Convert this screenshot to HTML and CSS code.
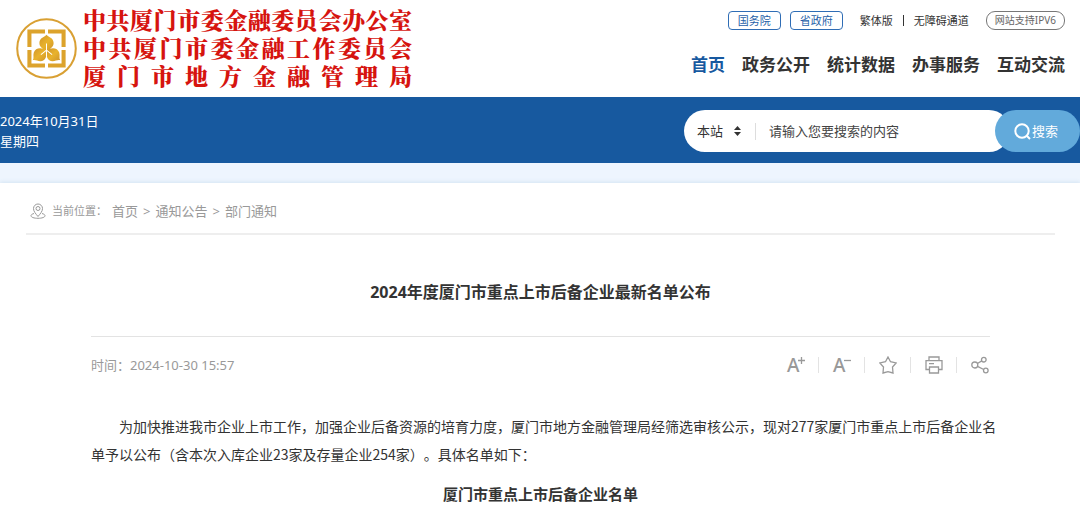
FILE: index.html
```
<!DOCTYPE html>
<html lang="zh-CN">
<head>
    <meta charset="UTF-8">
    <meta name="viewport" content="width=device-width, initial-scale=1.0">
    <title>2024年度厦门市重点上市后备企业最新名单公布</title>
    <link rel="stylesheet" href="styles.css">
</head>
<body>
    <header class="header">
        <a href="#" class="logo">
            <svg class="logo-mark" viewBox="0 0 60 60" aria-hidden="true">
                <defs>
                    <linearGradient id="gold" x1="0" y1="0" x2="1" y2="1">
                        <stop offset="0" stop-color="#cf942a"/>
                        <stop offset="0.5" stop-color="#e9b32c"/>
                        <stop offset="1" stop-color="#cf942a"/>
                    </linearGradient>
                </defs>
                <circle cx="30" cy="30" r="28.8" fill="none" stroke="#d9a033" stroke-width="2"/>
                <g fill="none" stroke="#dca32c" stroke-width="4">
                    <path d="M28.5 13.2H13.2V28.5M31.5 13.2H46.8V28.5M28.5 46.8H13.2V31.5M31.5 46.8H46.8V31.5"/>
                </g>
                <g fill="url(#gold)">
                    <path d="M30 16.5C31.500 18.500 37 19.500 37 24.500C37 28.500 33.500 30 30 33C26.500 30 23 28.500 23 24.500C23 19.500 28.500 18.500 30 16.5Z"/>
                    <path d="M29.700 32C31 37 29 42.500 24 42.500C21 42.500 19.500 41 16.500 41.500C18 39.500 16.500 37 17.500 34C19 29 25.500 28.500 29.700 32Z"/>
                    <path d="M30.300 32C29 37 31 42.500 36 42.500C39 42.500 40.500 41 43.500 41.500C42 39.500 43.500 37 42.500 34C41 29 34.500 28.500 30.300 32Z"/>
                </g>
                <path d="M30 25V32M30 31.500L24.500 36M30 31.500L35.500 36M30 32V38" fill="none" stroke="#fff"/>
            </svg>
            <span class="logo-text">
                <span>中共厦门市委金融委员会办公室</span>
                <span>中共厦门市委金融工作委员会</span>
                <span>厦门市地方金融管理局</span>
            </span>
        </a>
        <div class="header-right">
            <div class="top-links">
                <a href="#" class="tag">国务院</a>
                <a href="#" class="tag">省政府</a>
                <span class="plain-links">
                    <a href="#">繁体版</a>
                    <i class="bar"></i>
                    <a href="#">无障碍通道</a>
                </span>
                <a href="#" class="ipv6">网站支持IPV6</a>
            </div>
            <nav class="nav">
                <a href="#" class="active">首页</a>
                <a href="#">政务公开</a>
                <a href="#">统计数据</a>
                <a href="#">办事服务</a>
                <a href="#">互动交流</a>
            </nav>
        </div>
    </header>

    <div class="banner">
        <div class="date">2024年10月31日<br>星期四</div>
        <form class="search">
            <div class="search-box">
                <select class="scope" aria-label="搜索范围">
                    <option>本站</option>
                </select>
                <svg class="scope-arrow" viewBox="0 0 7 10" aria-hidden="true"><path d="M3.500 0L7 4H0ZM3.500 10L7 6H0Z" fill="#333"/></svg>
                <input class="keyword" type="text" aria-label="搜索内容" placeholder="请输入您要搜索的内容">
            </div>
            <button type="button" class="search-btn">
                <svg viewBox="0 0 17 17" aria-hidden="true"><circle cx="8" cy="8" r="6.700"/><path d="M12.500 12.500L16 16"/></svg>搜索
            </button>
        </form>
    </div>

    <main class="main">
        <div class="crumbs">
            <svg class="pin" viewBox="0 0 16 16" aria-hidden="true">
                <path d="M8 13.500C5.500 10.500 3.500 8.300 3.500 5.500A4.500 4.500 0 0 1 12.500 5.500C12.500 8.300 10.500 10.500 8 13.500Z"/>
                <circle cx="8" cy="5.500" r="2"/>
                <path d="M4 10.500C2 11 1 11.800 1 12.700C1 14.300 4 15.300 8 15.300S15 14.300 15 12.700C15 11.800 14 11 12 10.500"/>
            </svg>
            <span class="crumbs-label">当前位置：</span>
            <a href="#">首页</a>
            <span>&gt;</span>
            <a href="#">通知公告</a>
            <span>&gt;</span>
            <a href="#">部门通知</a>
        </div>

        <article class="article">
            <h1 class="title">2024年度厦门市重点上市后备企业最新名单公布</h1>
            <div class="meta">
                <span>时间：2024-10-30 15:57</span>
                <ul class="tools">
                    <li><button type="button" class="font-btn" aria-label="放大字体">A<svg viewBox="0 0 7 7"><path d="M3.500 0V7M0 3.500H7"/></svg></button></li>
                    <li><button type="button" class="font-btn" aria-label="缩小字体">A<svg viewBox="0 0 7 7"><path d="M0 3.500H7"/></svg></button></li>
                    <li><button type="button" aria-label="收藏"><svg class="icon" viewBox="0 0 18 18"><path d="M9 1L11.500 5.700L17.200 6.900L13.500 11L14 17L9 15.600L4 17L4.500 11L0.800 6.900L6.500 5.700Z"/></svg></button></li>
                    <li><button type="button" aria-label="打印"><svg class="icon" viewBox="0 0 18 18"><path d="M4 4.500V1H14V4.500M4 13.500H1V4.700H17V13.500H14M4.500 11H13.500V17H4.500ZM4 7.700H9"/></svg></button></li>
                    <li><button type="button" aria-label="分享"><svg class="icon" viewBox="0 0 18 18"><circle cx="3.800" cy="9" r="3"/><circle cx="12.800" cy="3.700" r="2.300"/><circle cx="14.800" cy="14.500" r="2.300"/><path d="M6.400 7.500L10.800 4.900M6.500 10.300L12.700 13.500"/></svg></button></li>
                </ul>
            </div>
            <div class="content">
                <p>为加快推进我市企业上市工作，加强企业后备资源的培育力度，厦门市地方金融管理局经筛选审核公示，现对277家厦门市重点上市后备企业名单予以公布（含本次入库企业23家及存量企业254家）。具体名单如下：</p>
                <h2>厦门市重点上市后备企业名单</h2>
            </div>
        </article>
    </main>
</body>
</html>
```
FILE: styles.css
```
* {
    box-sizing: border-box;
}

body {
    margin: 0;
    background: #fff;
    color: #333;
    font-family: "Noto Sans", "Noto Sans CJK SC", sans-serif;
    font-size: 13px;
    line-height: 20px;
}

a {
    color: inherit;
    text-decoration: none;
}

button {
    padding: 0;
    border: 0;
    background: none;
    color: inherit;
    font: inherit;
    cursor: pointer;
}

/* header */
.header {
    display: flex;
    justify-content: space-between;
    align-items: flex-start;
    padding: 6px 15px 7px 16px;
}

.logo {
    display: flex;
    align-items: center;
    gap: 6px;
}

.logo-mark {
    width: 61px;
    height: 61px;
}

.logo-text {
    width: 329px;
    color: #d6140f;
    font-family: "Noto Serif CJK SC", "Noto Sans CJK SC", serif;
    font-size: 23px;
    font-weight: 900;
    line-height: 28px;
}

.logo-text span {
    display: block;
    text-align: justify;
    text-align-last: justify;
    white-space: nowrap;
}

.header-right {
    display: flex;
    flex-direction: column;
    align-items: flex-end;
    gap: 22px;
    padding-top: 5px;
}

.top-links {
    display: flex;
    align-items: center;
    font-size: 11px;
    line-height: 17px;
}

.tag {
    margin-right: 9px;
    padding: 0 9px;
    border: 1px solid #2f6db5;
    border-radius: 4px;
    color: #1f5fa8;
}

.plain-links {
    display: flex;
    align-items: center;
    gap: 10px;
    margin: 0 17px 0 8px;
}

.bar {
    width: 1px;
    height: 11px;
    background: #333;
}

.ipv6 {
    padding: 0 8px;
    border: 1px solid #777;
    border-radius: 9px;
    color: #666;
    font-size: 10px;
}

.nav {
    display: flex;
    gap: 17px;
    font-size: 17px;
    font-weight: 700;
    line-height: 26px;
}

.nav .active {
    color: #1759a0;
}

/* date and search */
.banner {
    display: flex;
    justify-content: space-between;
    align-items: center;
    padding: 13px 0 11px;
    background: #17599f;
}

.date {
    color: #fff;
}

.search {
    display: flex;
    width: 396px;
}

.search-box {
    display: flex;
    flex: 1;
    align-items: center;
    height: 42px;
    padding-left: 13px;
    border-radius: 21px;
    background: #fff;
}

.scope {
    width: 37px;
    padding: 0;
    border: 0;
    background: none;
    color: #333;
    font: inherit;
    appearance: none;
}

.scope-arrow {
    width: 7px;
    height: 10px;
}

.keyword {
    flex: 1;
    min-width: 0;
    margin-left: 14px;
    padding: 0 0 0 13px;
    border: 0;
    border-left: 1px solid #ddd;
    outline: 0;
    background: none;
    color: #333;
    font: inherit;
    line-height: 17px;
}

.keyword::placeholder {
    color: #444;
}

.search-btn {
    display: flex;
    justify-content: center;
    align-items: center;
    gap: 1px;
    width: 85px;
    margin-left: -15px;
    padding-right: 3px;
    border-radius: 21px;
    background: #62aadb;
    color: #fff;
}

.search-btn svg {
    width: 17px;
    height: 17px;
    fill: none;
    stroke: #fff;
    stroke-width: 2;
}

/* page body */
.main {
    margin-top: 20px;
    box-shadow: 0 -1px 4px #d3e4f2, 0 -20px 0 #eef5fe;
}

.crumbs {
    display: flex;
    align-items: center;
    gap: 5px;
    margin: 0 25px 0 26px;
    padding: 18px 0 12px 4px;
    border-bottom: 2px solid #eee;
    color: #999;
}

.pin {
    width: 16px;
    height: 16px;
    fill: none;
    stroke: #999;
}

.crumbs-label {
    margin-left: 1px;
    font-size: 11px;
}

.article {
    padding: 0 90px 0 91px;
}

.title {
    margin: 0;
    padding: 45px 0 32px;
    font-size: 16px;
    font-weight: 700;
    line-height: 24px;
    text-align: center;
}

.meta {
    display: flex;
    justify-content: space-between;
    align-items: center;
    padding-top: 18px;
    border-top: 1px solid #e3e3e3;
    color: #999;
}

.tools {
    display: flex;
    margin: 0;
    padding: 0 1px 0 0;
    list-style: none;
}

.tools li {
    display: flex;
    align-items: center;
    height: 16px;
}

.tools li + li {
    margin-left: 13px;
    padding-left: 14px;
    border-left: 1px solid #e3e3e3;
}

.tools button {
    display: flex;
    width: 18px;
}

.tools svg {
    fill: none;
    stroke: #999;
    stroke-width: 1.3;
}

.icon {
    width: 18px;
    height: 18px;
}

.tools .font-btn {
    font-size: 19px;
    font-weight: 500;
    line-height: 20px;
}

.font-btn svg {
    flex: none;
    width: 7px;
    height: 7px;
    margin: 2px 0 0 -1px;
}

/* body text runs a little wider than the rules above it */
.content {
    margin-right: -8px;
    padding-top: 37px;
    font-size: 14px;
    line-height: 28px;
}

.content p {
    margin: 0;
    font-family: "Noto Sans CJK SC", sans-serif;
    text-indent: 2em;
    text-spacing-trim: space-all;
}

.content h2 {
    margin: 12px 8px 0 0;
    font-size: 15px;
    font-weight: 700;
    line-height: 28px;
    text-align: center;
}
```
